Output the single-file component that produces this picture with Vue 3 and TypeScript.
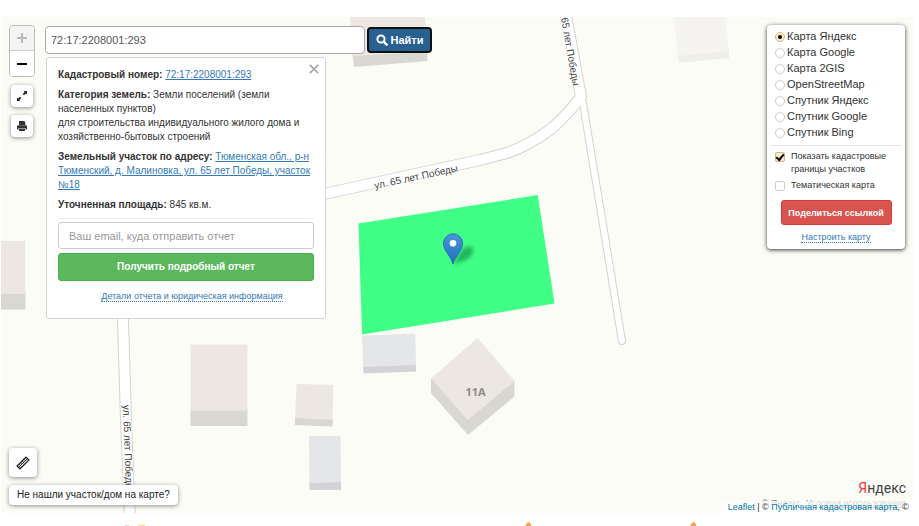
<script setup lang="ts">
import { ref } from 'vue'

interface Layer {
  id: string
  title: string
}

const layers: Layer[] = [
  { id: 'yandex-map', title: 'Карта Яндекс' },
  { id: 'google-map', title: 'Карта Google' },
  { id: '2gis-map', title: 'Карта 2GIS' },
  { id: 'osm', title: 'OpenStreetMap' },
  { id: 'yandex-sat', title: 'Спутник Яндекс' },
  { id: 'google-sat', title: 'Спутник Google' },
  { id: 'bing-sat', title: 'Спутник Bing' },
]

const activeLayer = ref('yandex-map')
const query = ref('72:17:2208001:293')
const email = ref('')
const showBorders = ref(true)
const thematic = ref(false)
const cardOpen = ref(true)
</script>

<template>
  <div class="page">
    <main class="map">
      <svg class="canvas" viewBox="1 17 912 496" preserveAspectRatio="xMidYMid slice" aria-hidden="true">
        <defs>
          <linearGradient id="pin-fill" x1="0" y1="0" x2="0" y2="1">
            <stop offset="0" stop-color="#4897d8" />
            <stop offset="1" stop-color="#1f6fc0" />
          </linearGradient>
          <filter id="pin-blur" x="-50%" y="-50%" width="200%" height="200%">
            <feGaussianBlur stdDeviation="2" />
          </filter>
        </defs>
        <rect x="1" y="17" width="912" height="496" fill="#fcfcf7" />

        <!-- roads: casing first, surface on top -->
        <g fill="none" stroke-linecap="round" stroke-linejoin="round">
          <g stroke="#d6d2d0">
            <path d="M583 103 L622 341" stroke-width="8" />
            <path d="M565 10 L581 97 C572 108 566 116 551 129 C538 139 518 150 505 153.500 L480 160 L326 193.500 L180 222" stroke-width="12" />
            <path d="M122 290 L123 320 L126 420 L130 520" stroke-width="12" />
          </g>
          <g stroke="#fff">
            <path d="M583 103 L622 341" stroke-width="6" />
            <path d="M565 10 L581 97 C572 108 566 116 551 129 C538 139 518 150 505 153.500 L480 160 L326 193.500 L180 222" stroke-width="10" />
            <path d="M122 290 L123 320 L126 420 L130 520" stroke-width="10" />
          </g>
        </g>

        <!-- buildings -->
        <g fill="#d8d7d1">
          <path d="M1 290 H25.500 V309.500 H1z" />
          <path d="M352 50 L427 48 L427.500 61 L354 67z" />
          <path d="M190.500 408 H247.500 V426 H190.500z" />
          <path d="M295 417 L333 418 L332.500 426.500 L295 425z" />
          <path d="M431 378 L468 416 L514.500 380 V396.500 L468 435 L431 393z" />
        </g>
        <g fill="#d4d2d4">
          <path d="M363 366 L416 364 V371.500 L363.500 373.500z" />
          <path d="M309.500 482 L341 481 V490 H309.500z" />
        </g>
        <path d="M678 54 L729 50 V58 L679 63z" fill="#efeee9" />
        <g fill="#ece7e1">
          <path d="M1 241 H25 V294 H1z" />
          <path d="M350 17 H425 L427 52 L353 56z" />
          <path d="M190.500 344.500 H247.500 V410.500 H190.500z" />
          <path d="M296.500 384 L333.500 384.700 L332.500 420 L295 418z" />
          <path d="M477.500 338 L514.500 381 L467.700 420 L431 378.500z" />
        </g>
        <g fill="#e5e6e8">
          <path d="M362 335.700 L415.300 333.500 L416 365 L363.300 367z" />
          <path d="M309 436 H340.500 L341 482 L309.500 483.500z" />
        </g>
        <path d="M673.500 17 H725 L729 51 L678 56z" fill="#f6f4f1" />

        <path d="M358.500 223.500 L537.700 195 L554.500 303.500 L362 334.500z" fill="#40ff86" />

        <g class="street">
          <text transform="translate(375 189) rotate(-12)">ул. 65 лет Победы</text>
          <text transform="translate(123 405) rotate(88)">ул. 65 лет Победы</text>
          <text transform="translate(573 86) rotate(80)" text-anchor="end">65 лет Победы</text>
        </g>
        <text class="house" x="475.500" y="395.500" text-anchor="middle">11А</text>

        <path d="M453 264 L462 250 Q468 244 473 248 Q474 257 463 261z" fill="#063" opacity=".5" filter="url(#pin-blur)" />
        <path d="M453 264 C451 256 443.500 251 443.500 243.300 A9.500 9.500 0 0 1 462.500 243.300 C462.500 251 455 256 453 264z" fill="url(#pin-fill)" stroke="#2b73b3" />
        <circle cx="453" cy="243.300" r="3.300" fill="#fff" />
      </svg>

      <div class="overlay">
        <div class="top">
          <nav class="tools">
            <div class="zoom">
              <button type="button" disabled aria-label="Приблизить">
                <svg width="12" height="12" viewBox="0 0 12 12"><path d="M6 1V11M1 6H11" stroke="#bbb" stroke-width="2" /></svg>
              </button>
              <button type="button" aria-label="Отдалить">
                <svg width="12" height="12" viewBox="0 0 12 12"><path d="M1 6H11" stroke="#000" stroke-width="2" /></svg>
              </button>
            </div>
            <button type="button" class="tool" aria-label="На весь экран">
              <svg width="12" height="12" viewBox="0 0 12 12">
                <path d="M7.500 1H11V4.500L9.900 3.400 8 5.300 6.700 4 8.600 2.100zM4.500 11H1V7.500L2.100 8.600 4 6.700 5.300 8 3.400 9.900z" fill="#222" />
              </svg>
            </button>
            <button type="button" class="tool" aria-label="Печать">
              <svg width="12" height="12" viewBox="0 0 12 12">
                <path d="M3 1H8.200L9.300 2.200V5H3zM2 5.300H10Q11 5.300 11 6.300V9.500H9.500V8H2.500V9.500H1V6.300Q1 5.300 2 5.300zM3 8.600H9V11H3z" fill="#333" />
              </svg>
            </button>
          </nav>

          <section class="finder">
            <form class="search" @submit.prevent>
              <input v-model="query" type="text" aria-label="Кадастровый номер" />
              <button type="submit">
                <svg width="12" height="12" viewBox="0 0 12 12" aria-hidden="true">
                  <circle cx="5" cy="5" r="3.600" fill="none" stroke="#fff" stroke-width="2" />
                  <path d="M7.600 7.600L10.700 10.700" stroke="#fff" stroke-width="2.400" stroke-linecap="round" />
                </svg>
                Найти
              </button>
            </form>

            <article v-if="cardOpen" class="card">
              <button type="button" class="close" aria-label="Закрыть" @click="cardOpen = false">
                <svg width="10" height="10" viewBox="0 0 10 10"><path d="M.8.8L9.200 9.200M9.200.8L.8 9.200" stroke="#aaa" stroke-width="1.800" /></svg>
              </button>
              <p><b>Кадастровый номер:</b> <a href="#parcel">72:17:2208001:293</a></p>
              <p>
                <b>Категория земель:</b> Земли поселений (земли населенных пунктов)<br />
                для строительства индивидуального жилого дома и хозяйственно-бытовых строений
              </p>
              <p>
                <b>Земельный участок по адресу:</b>
                {{ ' ' }}<a href="#address">Тюменская обл., р-н Тюменский, д. Малиновка, ул. 65 лет Победы, участок №18</a>
              </p>
              <p><b>Уточненная площадь:</b> 845 кв.м.</p>
              <form class="report" @submit.prevent>
                <input v-model="email" type="email" placeholder="Ваш email, куда отправить отчет" aria-label="Ваш email" />
                <button type="submit">Получить подробный отчет</button>
              </form>
              <div class="center details"><a class="dotted" href="#details">Детали отчета и юридическая информация</a></div>
            </article>
          </section>

          <aside class="layers">
            <div class="bases">
              <label v-for="layer in layers" :key="layer.id">
                <input v-model="activeLayer" type="radio" name="layer" :value="layer.id" />
                <span>{{ layer.title }}</span>
              </label>
            </div>
            <div class="extras">
              <label><input v-model="showBorders" type="checkbox" /><span>Показать кадастровые границы участков</span></label>
              <label><input v-model="thematic" type="checkbox" /><span>Тематическая карта</span></label>
            </div>
            <button type="button" class="share">Поделиться ссылкой</button>
            <div class="center"><a class="dotted" href="#settings">Настроить карту</a></div>
          </aside>
        </div>

        <div class="bottom">
          <button type="button" class="ruler" aria-label="Линейка">
            <svg width="14" height="14" viewBox="0 0 14 14">
              <path d="M1 10L10 1.200 13 4 4 12.800z" fill="none" stroke="#222" stroke-width="1.200" />
              <path d="M2.500 11.500L11.500 2.700" stroke="#222" />
              <path d="M3 8L4.800 9.800M4.600 6.400L6 7.800M6.200 4.900L8 6.700M7.800 3.300L9.200 4.700" stroke="#222" />
            </svg>
          </button>
          <button type="button" class="hint">Не нашли участок/дом на карте?</button>
        </div>
      </div>

      <div class="credits">
        <div class="logo"><span>Я</span>ндекс</div>
        <div class="terms">© Яндекс. <a href="#terms">Условия использования</a></div>
        <div class="attribution"><a href="#leaflet">Leaflet</a> | © <a href="#owner">Публичная кадастровая карта</a>, ©</div>
      </div>
    </main>

    <footer class="footer">
      <svg width="919" height="13" viewBox="0 513 919 13" aria-hidden="true">
        <path d="M525 526 L527 523 L529 522 L531 524 V526zM690 526 L692 523 L694 522 L696 524 V526z" fill="#f5a54a" />
        <path d="M125 525H129V526H125z" fill="#f6cfdc" />
        <path d="M138 525H145V526H138z" fill="#fcd66a" />
      </svg>
    </footer>
  </div>
</template>

<style>
body {
  margin: 0;
  background: #fff;
}
</style>

<style scoped>
* {
  box-sizing: border-box;
}
.page {
  display: flex;
  flex-direction: column;
  min-height: 100vh;
  padding-top: 17px;
  font-family: "Liberation Sans", Arial, sans-serif;
  font-size: 10px;
  line-height: 14px;
  color: #333;
}
.map {
  position: relative;
  display: flex;
  flex: 1;
  margin: 0 6px 0 1px;
  overflow: hidden;
  background: #fcfcf7;
}
.canvas {
  position: absolute;
  inset: 0;
  width: 100%;
  height: 100%;
}
.street {
  font: 10px "Liberation Sans", sans-serif;
  fill: #444;
  stroke: #fff;
  stroke-width: 2px;
  paint-order: stroke;
}
.house {
  font: bold 11px "Open Sans", sans-serif;
  fill: #8d8a8a;
}
.overlay {
  position: relative;
  display: flex;
  flex: 1;
  flex-direction: column;
  justify-content: space-between;
  padding: 8px;
}
.top {
  display: flex;
  align-items: flex-start;
}
button,
input {
  font: inherit;
  margin: 0;
}
button {
  display: flex;
  align-items: center;
  justify-content: center;
  padding: 0;
  cursor: pointer;
}
a {
  color: #337ab7;
  text-decoration: underline;
}
.tools {
  display: flex;
  flex-direction: column;
  align-items: center;
  gap: 8px;
  width: 26px;
}
.zoom {
  width: 100%;
  border: 1px solid #bbb;
  border-radius: 4px;
  background: #fff;
  overflow: hidden;
}
.zoom button {
  width: 100%;
  height: 25px;
  border: 0;
  background: #fff;
}
.zoom button:first-child {
  border-bottom: 1px solid #ccc;
  background: #f4f4f4;
}
.tool,
.ruler,
.hint {
  border: 0;
  border-radius: 4px;
  background: #fff;
  box-shadow: 0 1px 4px rgba(0, 0, 0, 0.45);
}
.tool {
  width: 22px;
  height: 22px;
}
.finder {
  margin: 1px 0 0 10px;
}
.search {
  display: flex;
  align-items: center;
  gap: 2px;
}
.search input {
  width: 320px;
  height: 28px;
  padding: 0 5px;
  border: 1px solid #aaa;
  border-radius: 4px;
  background: #fff;
  font-size: 11px;
  color: #555;
}
.search button {
  gap: 3px;
  width: 65px;
  height: 26px;
  border: 2px solid #101010;
  border-radius: 4px;
  background: #286090;
  color: #fff;
  font-size: 11px;
  font-weight: bold;
}
.card {
  position: relative;
  width: 280px;
  margin: 3px 0 0 1px;
  padding: 10px 11px 15px;
  border: 1px solid #d4d4d4;
  border-radius: 3px;
  background: #fff;
}
.card p {
  margin: 0 0 6px;
}
.close {
  position: absolute;
  top: 6px;
  right: 6px;
  border: 0;
  background: none;
}
.report {
  display: flex;
  flex-direction: column;
  gap: 4px;
  margin-bottom: 8px;
  padding-top: 3px;
  border-top: 1px solid #eee;
}
.report input {
  height: 27px;
  padding: 0 10px;
  border: 1px solid #ccc;
  border-radius: 3px;
  background: #fff;
  font-size: 11px;
}
.report input::placeholder {
  color: #999;
  opacity: 1;
}
.report button {
  height: 28px;
  border: 1px solid #4cae4c;
  border-radius: 3px;
  background: #5cb85c;
  color: #fff;
  font-size: 10px;
  font-weight: bold;
}
.center {
  text-align: center;
}
.details {
  padding-left: 12px;
}
.dotted {
  font-size: 9px;
  line-height: 10px;
  display: inline-block;
  text-decoration: none;
  border-bottom: 1px dotted #337ab7;
}
.layers {
  width: 138px;
  margin-left: auto;
  padding: 3px 4px 5px;
  border-radius: 4px;
  background: #fff;
  box-shadow: 0 1px 4px rgba(0, 0, 0, 0.8);
}
.layers label {
  display: flex;
}
.bases {
  padding: 0 4px 5px;
  border-bottom: 1px solid #e5e5e5;
}
.bases label {
  align-items: center;
  gap: 2px;
  font-size: 11px;
  line-height: 16px;
}
.layers input {
  appearance: none;
  display: grid;
  place-items: center;
  flex: none;
  width: 10px;
  height: 10px;
  border: 1px solid #ccc;
  background: #fff;
}
.layers input[type="radio"] {
  margin-top: 2px;
  border-radius: 50%;
}
.layers input:checked {
  border-color: #c9b98f;
  background: #fdebc8;
}
.layers input[type="radio"]:checked::after {
  content: "";
  width: 4px;
  height: 4px;
  border-radius: 50%;
  background: #000;
}
.extras {
  padding: 4px 4px 5px;
}
.extras label {
  gap: 6px;
  margin-bottom: 3px;
  font-size: 9px;
  line-height: 13px;
}
.extras input {
  margin-top: 2px;
  border-radius: 2px;
}
.extras input:checked::after {
  content: "";
  width: 6px;
  height: 3px;
  margin-bottom: 2px;
  border: solid #000;
  border-width: 0 0 2px 2px;
  transform: rotate(-50deg);
}
.share {
  width: 111px;
  height: 25px;
  margin: 0 auto 5px;
  border: 1px solid #d43f3a;
  border-radius: 3px;
  background: #d9534f;
  color: #fff;
  font-size: 9px;
  font-weight: bold;
}
.bottom {
  display: flex;
  flex-direction: column;
  align-items: flex-start;
  gap: 8px;
}
.ruler {
  width: 28px;
  height: 29px;
}
.hint {
  height: 20px;
  padding: 0 8px;
  color: #222;
  font-size: 10px;
}
.credits {
  position: absolute;
  right: 0;
  bottom: 0;
  display: grid;
  justify-items: end;
  font-size: 9px;
  line-height: 12px;
  color: #333;
}
.logo {
  padding-right: 7px;
  font: 14px/18px Roboto, sans-serif;
  color: #444;
}
.logo span {
  color: #f33;
}
.terms {
  grid-row: 2;
  padding-right: 7px;
  margin-bottom: -8px;
  color: #777;
}
.terms a {
  color: inherit;
}
.attribution {
  position: relative;
  padding: 0 4px;
  background: rgba(255, 255, 255, 0.7);
}
.attribution a {
  color: #0078a8;
  text-decoration: none;
}
.footer {
  height: 13px;
  overflow: hidden;
}
.footer svg {
  display: block;
}
</style>
